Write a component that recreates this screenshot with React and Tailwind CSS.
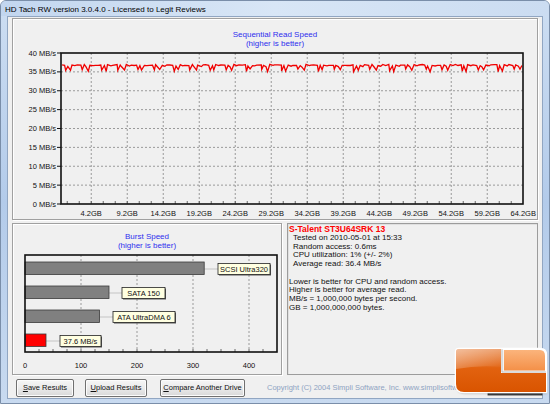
import React from "react";

const FONT = "'Liberation Sans', Arial, sans-serif";

// pseudo random so the trace stays the same each render
let seed = 11;
const rand = () => {
  seed = (seed * 9301 + 49297) % 233280;
  return seed / 233280;
};

const pattern = [
  [0, 0], [3, 0], [4, 6], [6, 1], [8, 6], [10, 0], [13, 1], [15, 0],
  [19, 0], [20, 5], [22, 0], [24, 2], [26, 6], [28, 0], [31, 1], [33, 0],
];

const buildTrace = () => {
  const pts = [];
  for (let base = 62; base < 523; base += 36) {
    pattern.forEach(([dx, dy]) => {
      const x = base + dx + (rand() - 0.5);
      if (x > 522) return;
      const y = 65 + dy * (0.7 + rand() * 0.4) + (rand() - 0.5) * 1.2;
      pts.push(`${x.toFixed(1)},${y.toFixed(1)}`);
    });
  }
  return pts.join(" ");
};

const trace = buildTrace();

const yLabels = [40, 35, 30, 25, 20, 15, 10, 5, 0];
const xLabels = ["4.2GB", "9.2GB", "14.2GB", "19.2GB", "24.2GB", "29.2GB", "34.2GB", "39.2GB", "44.2GB", "49.2GB", "54.2GB", "59.2GB", "64.2GB"];

const SequentialChart = () => {
  const yOf = (v) => 204 - (v * 151) / 40;
  const minor = [];
  for (let x = 67.24; x < 523; x += 12) minor.push(x);
  return (
    <svg width="524" height="200" viewBox="13 19 524 200" style={{ fontFamily: FONT }}>
      <text x="275" y="37" fontSize="8" fill="#2f2fee" textAnchor="middle">Sequential Read Speed</text>
      <text x="275" y="46" fontSize="8" fill="#2f2fee" textAnchor="middle">(higher is better)</text>
      {yLabels.slice(1, 8).map((v) => (
        <line key={v} x1="61" x2="523" y1={yOf(v)} y2={yOf(v)} stroke="#9a9a9a" strokeWidth="1" strokeDasharray="2 2" />
      ))}
      {xLabels.slice(0, 12).map((l, i) => (
        <line key={l} x1={91.24 + 36 * i} x2={91.24 + 36 * i} y1="53" y2="204" stroke="#9a9a9a" strokeWidth="1" strokeDasharray="2 2" />
      ))}
      {minor.map((x) => (
        <line key={x} x1={x} x2={x} y1="201" y2="204" stroke="#444" strokeWidth="0.8" />
      ))}
      <polyline points={trace} fill="none" stroke="#f00000" strokeWidth="1.3" />
      <rect x="61" y="53" width="462" height="151" fill="none" stroke="#111" strokeWidth="1.6" />
      {yLabels.map((v) => (
        <g key={v}>
          <line x1="57" x2="61" y1={yOf(v)} y2={yOf(v)} stroke="#111" strokeWidth="1" />
          <text x="56" y={yOf(v) + 2.6} fontSize="7.5" fill="#111" textAnchor="end">{v} MB/s</text>
        </g>
      ))}
      {xLabels.map((l, i) => (
        <text key={l} x={91.24 + 36 * i} y="216" fontSize="7.5" fill="#111" textAnchor="middle">{l}</text>
      ))}
    </svg>
  );
};

const bars = [
  { label: "SCSI Ultra320", w: 204.2, box: [218, 270], fill: "#808080" },
  { label: "SATA 150", w: 109, box: [122, 165], fill: "#808080" },
  { label: "ATA UltraDMA 6", w: 99.5, box: [113, 175], fill: "#808080" },
  { label: "37.6 MB/s", w: 46, box: [60, 101], fill: "#ff0000" },
];

const BurstChart = () => {
  const ticks = [];
  for (let x = 39; x < 277; x += 14) ticks.push(x);
  return (
    <svg width="268" height="150" viewBox="13 224 268 150" style={{ fontFamily: FONT }}>
      <text x="147" y="238.5" fontSize="8" fill="#2f2fee" textAnchor="middle">Burst Speed</text>
      <text x="147" y="247.5" fontSize="8" fill="#2f2fee" textAnchor="middle">(higher is better)</text>
      {[81, 137, 193, 249].map((x) => (
        <line key={x} x1={x} x2={x} y1="255" y2="352" stroke="#9a9a9a" strokeWidth="1" strokeDasharray="2 2" />
      ))}
      {ticks.map((x) => (
        <line key={x} x1={x} x2={x} y1="349" y2="352" stroke="#444" strokeWidth="0.8" />
      ))}
      {bars.map((b, i) => {
        const y = 262 + 24 * i;
        return (
          <g key={b.label}>
            <line x1={b.w} x2={b.box[0]} y1={y + 7} y2={y + 7} stroke="#c4c4c4" strokeWidth="1" />
            <rect x="25" y={y} width={b.w - 25} height="12.5" fill={b.fill} stroke="#3a3a3a" strokeWidth="0.8" />
            <rect x={b.box[0] + 1} y={y + 2.5} width={b.box[1] - b.box[0]} height="11" fill="#555" />
            <rect x={b.box[0]} y={y + 1.5} width={b.box[1] - b.box[0]} height="11" fill="#ffffe1" stroke="#222" strokeWidth="0.8" />
            <text x={(b.box[0] + b.box[1]) / 2} y={y + 9.6} fontSize="7.5" fill="#111" textAnchor="middle">{b.label}</text>
          </g>
        );
      })}
      <rect x="25" y="255" width="252" height="97" fill="none" stroke="#111" strokeWidth="1.6" />
      {[0, 100, 200, 300, 400].map((v) => (
        <text key={v} x={25 + v * 0.56} y="367.5" fontSize="7.5" fill="#111" textAnchor="middle">{v}</text>
      ))}
    </svg>
  );
};

const Logo = () => (
  <svg className="absolute left-[451px] top-[344px]" width="99" height="56" viewBox="451 344 99 56">
    <defs>
      <linearGradient id="lgMain" x1="0" y1="0" x2="0" y2="1">
        <stop offset="0" stopColor="#e98a4c" />
        <stop offset="0.45" stopColor="#e2620f" />
        <stop offset="1" stopColor="#d95400" />
      </linearGradient>
      <linearGradient id="lgPiece" x1="0" y1="0" x2="0" y2="1">
        <stop offset="0" stopColor="#fbb47c" />
        <stop offset="1" stopColor="#f49048" />
      </linearGradient>
      <linearGradient id="lgGloss" x1="0" y1="0" x2="1" y2="1">
        <stop offset="0" stopColor="#fff" stopOpacity="0.45" />
        <stop offset="1" stopColor="#fff" stopOpacity="0" />
      </linearGradient>
      <filter id="blur" x="-10%" y="-10%" width="120%" height="130%">
        <feGaussianBlur stdDeviation="1.2" />
      </filter>
    </defs>
    <rect x="487" y="385" width="54" height="9" fill="#3c3c3c" stroke="#1e1e1e" strokeWidth="0.8" />
    <path d="M458,348 H539 Q545,348 545,354 V391 H463 Q455,391 455,383 V351 Q455,348 458,348 Z" fill="#777" opacity="0.55" filter="url(#blur)" transform="translate(1,1.5)" />
    <path d="M458,348 H539 Q545,348 545,354 V391 H463 Q455,391 455,383 V351 Q455,348 458,348 Z" fill="#f4f4f4" stroke="#fff" strokeWidth="2.5" />
    <path d="M458,348 H500 V372 H545 V391 H463 Q455,391 455,383 V351 Q455,348 458,348 Z" fill="url(#lgMain)" />
    <path d="M458,348 H500 V366 Q478,364 455,368 V351 Q455,348 458,348 Z" fill="url(#lgGloss)" />
    <line x1="501" x2="501" y1="348" y2="371" stroke="#b8b8b8" strokeWidth="0.8" />
    <line x1="501" x2="545" y1="371" y2="371" stroke="#b8b8b8" strokeWidth="0.8" />
    <path d="M503,349 H539 Q544,349 544,355 V369.5 H503 Z" fill="url(#lgPiece)" />
  </svg>
);

const Btn = ({ first, rest, className }) => (
  <button
    className={`h-[18px] shrink-0 border border-[#707070] rounded-[2px] bg-gradient-to-b from-[#f6f6f6] via-[#ebebeb] to-[#d8d8d8] text-[7.5px] text-[#111] leading-none shadow-[inset_0_0_0_1px_#fcfcfc] ${className}`}
  >
    <span className="underline">{first}</span>
    {rest}
  </button>
);

export default function App() {
  return (
    <div className="w-[550px] h-[404px] bg-white">
      <div
        className="relative w-[550px] h-[404px] overflow-hidden rounded-t-[6px] border border-[#7a8ea9] bg-gradient-to-b from-[#cddef2] via-[#b3cbea] to-[#c8daf0] flex flex-col"
        style={{ fontFamily: FONT }}
      >
        <div className="h-[15px] shrink-0 flex items-center pl-[4px] bg-gradient-to-r from-[#c2d6ef] via-[#d8e6f6] to-[#cbdcf1]">
          <span className="text-[8px] text-black leading-none pt-[3px]">HD Tach RW version 3.0.4.0 - Licensed to Legit Reviews</span>
        </div>
        <div className="flex-1 mx-[6px] mb-[4px] border border-[#91a6c2] bg-[#f0f0f0] flex flex-col px-[4px] pt-[1px]">
          <div className="h-[202px] shrink-0 border border-[#a0a0a0] shadow-[inset_1px_1px_0_#fff,1px_1px_0_#fff]">
            <SequentialChart />
          </div>
          <div className="h-[152px] shrink-0 mt-[3px] flex gap-[5px]">
            <div className="w-[270px] shrink-0 border border-[#a0a0a0] shadow-[inset_1px_1px_0_#fff,1px_1px_0_#fff]">
              <BurstChart />
            </div>
            <div className="flex-1 border border-[#9c9c9c] shadow-[inset_1px_1px_0_#e0e0e0] pl-[1px] pt-[1px] text-[8px] leading-[8.7px] text-[#111]">
              <div className="text-[8.5px] font-bold text-[#ff0000] leading-[9px]">S-Talent ST3U64SRK 13</div>
              <div className="pl-[4px]">
                <div>Tested on 2010-05-01 at 15:33</div>
                <div>Random access: 0.6ms</div>
                <div>CPU utilization: 1% (+/- 2%)</div>
                <div>Average read: 36.4 MB/s</div>
              </div>
              <div className="h-[8.7px]" />
              <div>Lower is better for CPU and random access.</div>
              <div>Higher is better for average read.</div>
              <div>MB/s = 1,000,000 bytes per second.</div>
              <div>GB = 1,000,000,000 bytes.</div>
            </div>
          </div>
          <div className="mt-[4px] flex items-center pl-[4px]">
            <Btn first="S" rest="ave Results" className="w-[58px]" />
            <Btn first="U" rest="pload Results" className="w-[62px] ml-[11px]" />
            <Btn first="C" rest="ompare Another Drive" className="w-[85px] ml-[13px]" />
            <span className="ml-[22px] text-[7.5px] text-[#8ea3c2] whitespace-nowrap">
              Copyright (C) 2004 Simpli Software, Inc. www.simplisoftware.com
            </span>
          </div>
        </div>
        <Logo />
      </div>
    </div>
  );
}
